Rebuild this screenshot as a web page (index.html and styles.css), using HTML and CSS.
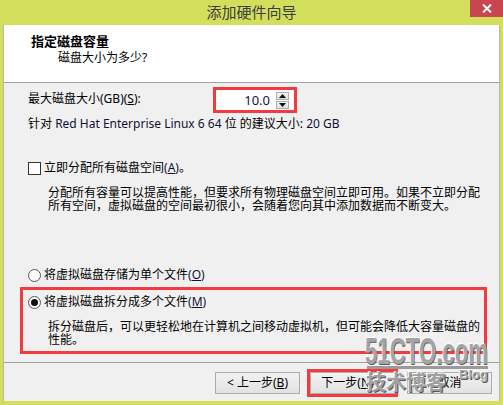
FILE: index.html
```html
<!DOCTYPE html>
<html lang="zh-CN">
<head>
<meta charset="utf-8">
<title>添加硬件向导</title>
<link rel="stylesheet" href="styles.css">
</head>
<body>
<div class="window">
  <div class="titlebar">
    <span></span>
    <span class="title">添加硬件向导</span>
    <span class="close"><svg width="10" height="9" viewBox="0 0 10 9"><path d="M1 0.5L9 8.5M9 0.5L1 8.5" stroke="#fff" stroke-width="2"/></svg></span>
  </div>
  <div class="client">
    <div class="header">
      <div class="h-title">指定磁盘容量</div>
      <div class="h-sub">磁盘大小为多少?</div>
    </div>
    <div class="content">
      <div class="size-row">
        <span class="size-label">最大磁盘大小(GB)(<u>S</u>):</span>
        <div class="spin">
          <span class="spin-value">10.0</span>
          <span class="spin-btns">
            <span class="spin-btn"><svg width="7" height="4" viewBox="0 0 7 4"><path d="M3.5 0L7 4H0Z" fill="#111"/></svg></span>
            <span class="spin-btn"><svg width="7" height="4" viewBox="0 0 7 4"><path d="M0 0H7L3.5 4Z" fill="#111"/></svg></span>
          </span>
        </div>
      </div>
      <div class="hint">针对 <span class="lat">Red Hat Enterprise Linux 6 64</span> 位 的建议大小: <span class="lat">20 GB</span></div>
      <div class="option check-row"><span class="checkbox"></span><span>立即分配所有磁盘空间<span class="lat">(<u>A</u>)</span>。</span></div>
      <p class="desc">分配所有容量可以提高性能，但要求所有物理磁盘空间立即可用。如果不立即分配<br>所有空间，虚拟磁盘的空间最初很小，会随着您向其中添加数据而不断变大。</p>
      <div class="option radio-row"><span class="radio"></span><span>将虚拟磁盘存储为单个文件<span class="lat">(<u>O</u>)</span></span></div>
      <div class="mark-box">
        <div class="option"><span class="radio checked"></span><span>将虚拟磁盘拆分成多个文件<span class="lat">(<u>M</u>)</span></span></div>
        <p class="desc desc-split">拆分磁盘后，可以更轻松地在计算机之间移动虚拟机，但可能会降低大容量磁盘的<br>性能。</p>
      </div>
    </div>
    <div class="footer">
      <button class="btn btn-prev">&lt; 上一步(<u>B</u>)</button>
      <button class="btn btn-next">下一步(<u>N</u>) &gt;</button>
      <button class="btn btn-cancel">取消</button>
    </div>
  </div>
  <div class="watermark">
    <span class="wm-main">51CTO.com</span>
    <span class="wm-bar"></span>
    <span class="wm-cn">技术博客</span>
    <span class="wm-blog">Blog</span>
  </div>
</div>
</body>
</html>
```

FILE: styles.css
```css
* { box-sizing: border-box; }

body {
  margin: 0;
  font-family: "Noto Sans", "Noto Sans CJK SC", sans-serif;
  font-size: 12px;
  line-height: 16px;
  color: #000;
  background: #d3df5c;
}

.window {
  width: 503px;
  height: 405px;
  background: #d3df5c;
  padding: 0 3px 4px;
  display: flex;
  flex-direction: column;
  position: relative;
  overflow: hidden;
}

.titlebar {
  height: 25px;
  display: grid;
  grid-template-columns: 1fr auto 1fr;
  align-items: start;
}

.title {
  font-family: "Noto Sans CJK SC", sans-serif;
  font-size: 15px;
  line-height: 23px;
  color: #3c3c3c;
}

.close {
  justify-self: end;
  margin-right: -3px;
  width: 33px;
  height: 17px;
  background: #c9464f;
  display: flex;
  align-items: center;
  justify-content: center;
}

.client {
  flex: 1;
  display: flex;
  flex-direction: column;
  background: #f0f0f0;
  border-left: 1px solid #b4b4b4;
  border-right: 1px solid #b4b4b4;
}

.header {
  height: 58px;
  background: #fff;
  border-bottom: 1px solid #a0a0a0;
  padding: 8px 0 0 27px;
}

.h-title {
  font-family: "Noto Sans CJK SC", sans-serif;
  font-size: 13px;
  font-weight: bold;
  line-height: 16px;
}

.h-sub {
  margin: 1px 0 0 27px;
  line-height: 16px;
}

.content {
  flex: 1;
  padding: 0 12px 0 24px;
}

.size-row {
  margin-top: 4px;
  height: 26px;
  display: flex;
  align-items: center;
}

.size-label {
  flex: 0 0 185px;
  margin-top: -3px;
}

.spin {
  width: 84px;
  height: 26px;
  border: 3px solid #f23b3f;
  background: #fff;
  display: flex;
  align-items: center;
  padding: 0 5px 0 0;
}

.spin-value {
  flex: 1;
  text-align: right;
  padding-right: 6px;
  font-size: 13px;
  color: #10103a;
}

.spin-btns {
  display: flex;
  flex-direction: column;
  gap: 1px;
}

.spin-btn {
  width: 13px;
  height: 8px;
  border: 1px solid #acacac;
  background: linear-gradient(#f4f4f4, #e0e0e0);
  display: flex;
  align-items: center;
  justify-content: center;
}

.lat { color: #101036; }

.hint { margin-top: 3px; }

.option {
  display: flex;
  align-items: center;
  gap: 3px;
  line-height: 16px;
}

.check-row { margin-top: 28px; }

.checkbox {
  width: 13px;
  height: 13px;
  border: 1px solid #333;
  background: #fff;
}

.desc {
  margin: 10px 0 0 20px;
  line-height: 13px;
}

.radio-row { margin-top: 55px; }

.radio {
  width: 13px;
  height: 13px;
  border: 1px solid #555;
  border-radius: 50%;
  background: #fff;
  display: flex;
  align-items: center;
  justify-content: center;
}

.radio.checked::after {
  content: "";
  width: 7px;
  height: 7px;
  border-radius: 50%;
  background: #111;
}

.mark-box {
  margin: 4px 0 0 -8px;
  border: 3px solid #f23b3f;
  padding: 4px 0 5px 5px;
}

.desc-split { margin-top: 10px; }

.footer {
  height: 39px;
  border-top: 1px solid #a0a0a0;
  display: flex;
  justify-content: flex-end;
  align-items: flex-start;
  padding: 9px 7px 0 0;
  gap: 10px;
}

.btn {
  width: 85px;
  height: 22px;
  border: 1px solid #adadad;
  background: linear-gradient(#f2f2f2, #e2e2e2);
  font: inherit;
  color: #000;
  padding: 0;
  line-height: 20px;
}

.btn-next {
  outline: 3px solid #f23b3f;
  outline-offset: 0;
  margin-right: 2px;
}

.watermark {
  position: absolute;
  left: 0;
  top: 0;
  width: 503px;
  height: 405px;
  pointer-events: none;
}

.wm-main {
  position: absolute;
  left: 365px;
  top: 333px;
  font-family: "Liberation Sans", sans-serif;
  font-weight: bold;
  font-size: 37px;
  line-height: 37px;
  color: #a4a4a4;
  transform: scaleX(0.6);
  transform-origin: left top;
  text-shadow: -1px -1px 0 #fff, 1px 1px 0 #5a5a5a;
  white-space: nowrap;
}

.wm-bar {
  position: absolute;
  left: 367px;
  top: 366px;
  width: 121px;
  height: 3px;
  background: #9a9a9a;
}

.wm-cn {
  position: absolute;
  left: 366px;
  top: 371px;
  font-family: "Noto Sans CJK SC", sans-serif;
  font-weight: bold;
  font-size: 20px;
  line-height: 22px;
  color: #a0a0a0;
  text-shadow: -1px -1px 0 #fff, 1px 1px 0 #555;
  white-space: nowrap;
}

.wm-blog {
  position: absolute;
  left: 459px;
  top: 368px;
  font-family: "Liberation Sans", sans-serif;
  font-weight: bold;
  font-size: 13px;
  line-height: 14px;
  color: #a4a4a4;
  text-shadow: -1px -1px 0 #fff, 1px 1px 0 #555;
}
```
